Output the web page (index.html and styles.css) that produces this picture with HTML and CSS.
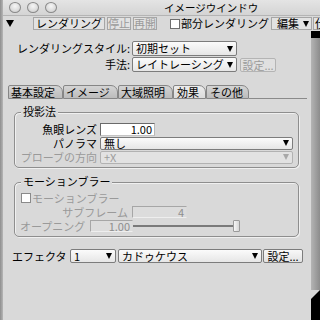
FILE: index.html
```html
<!DOCTYPE html>
<html lang="ja">
<head>
  <meta charset="UTF-8" />
  <title>イメージウインドウ</title>
  <link rel="stylesheet" href="styles.css">
</head>
<body>
  <div class="screen">
    <div class="edge"></div>
    <div class="win">
      <div class="titlebar">
        <span class="light"></span><span class="light"></span><span class="light"></span>
        <span class="title">イメージウインドウ</span>
      </div>

      <div class="toolbar">
        <span class="tri"></span>
        <span class="tbtn w-render">レンダリング</span>
        <span class="tbtn off w-small">停止</span>
        <span class="tbtn off w-small">再開</span>
        <span class="check"></span>
        <span class="check-text">部分レンダリング</span>
        <span class="tbtn w-edit">編集<span class="arrow"></span></span>
        <span class="tbtn w-more">仕様</span>
      </div>

      <div class="mid">
        <div class="body">
          <div class="frow">
            <span class="flabel">レンダリングスタイル:</span>
            <span class="sel w-style"><span class="txt">初期セット</span><span class="arrow"></span></span>
          </div>
          <div class="frow">
            <span class="flabel">手法:</span>
            <span class="sel w-style"><span class="txt">レイトレーシング</span><span class="arrow"></span></span>
            <span class="btn off w-set">設定...</span>
          </div>

          <div class="tabs">
            <span class="tab w-t1">基本設定</span>
            <span class="tab w-t1">イメージ</span>
            <span class="tab w-t1">大域照明</span>
            <span class="tab on w-t4">効果</span>
            <span class="tab w-t5">その他</span>
            <span class="tab-fill"></span>
          </div>

          <div class="group g-first">
            <div class="gtitle">投影法</div>
            <div class="grows">
              <div class="grow">
                <span class="glabel">魚眼レンズ</span>
                <span class="field w-fish">1.00</span>
              </div>
              <div class="grow">
                <span class="glabel">パノラマ</span>
                <span class="sel w-wide"><span class="txt">無し</span><span class="arrow"></span></span>
              </div>
              <div class="grow">
                <span class="glabel off-text">プローブの方向</span>
                <span class="sel dis w-wide"><span class="txt">+X</span><span class="arrow"></span></span>
              </div>
            </div>
          </div>

          <div class="group g-second">
            <div class="gtitle">モーションブラー</div>
            <div class="grows">
              <div class="grow pad-check">
                <span class="check"></span>
                <span class="off-text">モーションブラー</span>
              </div>
              <div class="grow">
                <span class="glabel sub off-text">サブフレーム</span>
                <span class="field dis w-sub">4</span>
              </div>
              <div class="grow">
                <span class="open-label off-text">オープニング</span>
                <span class="field dis w-open">1.00</span>
                <span class="track"></span>
                <span class="thumb"></span>
              </div>
            </div>
          </div>

          <div class="brow">
            <span class="blabel">エフェクタ</span>
            <span class="sel w-num"><span class="txt">1</span><span class="arrow"></span></span>
            <span class="sel w-eff"><span class="txt">カドゥケウス</span><span class="arrow"></span></span>
            <span class="btn w-bset">設定...</span>
          </div>
        </div>

        <div class="desk">
          <div class="desk-top"></div>
          <div class="desk-mid"></div>
          <div class="desk-bot"></div>
        </div>
      </div>
    </div>
  </div>
</body>
</html>
```

FILE: styles.css
```css
* {
  box-sizing: border-box;
}
body {
  margin: 0;
  font-family: "Noto Sans CJK JP", "Liberation Sans", sans-serif;
  font-size: 11px;
  color: #000;
}
.screen {
  display: flex;
  width: 320px;
  height: 320px;
  overflow: hidden;
  background: #d9d9d9;
}
.edge {
  width: 3px;
  background: linear-gradient(to right, #8e8e8e, #b6b6b6);
}
.win {
  width: 317px;
  display: flex;
  flex-direction: column;
}

/* title bar */
.titlebar {
  height: 16px;
  display: flex;
  align-items: center;
  padding-left: 6px;
  background: linear-gradient(#e4e4e4, #d4d4d4);
  border-bottom: 1px solid #b4b4b4;
}
.light {
  width: 12px;
  height: 11px;
  margin-right: 6px;
  border-radius: 50%;
  border: 1px solid #8a8a8a;
  background: radial-gradient(circle at 50% 35%, #f6f6f6, #cacaca);
}
.title {
  margin-left: 101px;
  font-size: 10.5px;
  line-height: 14px;
}

/* toolbar */
.toolbar {
  height: 15px;
  display: flex;
  align-items: center;
  padding-left: 3px;
  overflow: hidden;
  white-space: nowrap;
}
.tri {
  width: 0;
  height: 0;
  border-left: 4px solid transparent;
  border-right: 4px solid transparent;
  border-top: 7px solid #000;
  margin-right: 19px;
}
.tbtn {
  height: 13px;
  line-height: 11px;
  border: 1px solid #a6a6a6;
  background: #e2e2e2;
  text-align: center;
  flex-shrink: 0;
}
.tbtn + .tbtn {
  margin-left: 2px;
}
.w-render { width: 72px; }
.w-small { width: 24px; }
.w-edit {
  width: 41px;
  display: flex;
  align-items: center;
  padding-left: 5px;
  gap: 4px;
}
.w-more {
  width: 30px;
  margin-left: 1px !important;
  text-align: left;
  padding-left: 1px;
}
.off {
  color: #9a9a9a;
}
.check {
  width: 10px;
  height: 10px;
  border: 1px solid #6e6e6e;
  background: #fff;
  flex-shrink: 0;
}
.toolbar .check {
  margin-left: 13px;
}
.check-text {
  margin-left: 1px;
  margin-right: 2px;
  line-height: 13px;
}
.arrow {
  width: 0;
  height: 0;
  border-left: 3.5px solid transparent;
  border-right: 3.5px solid transparent;
  border-top: 6px solid #000;
  flex-shrink: 0;
}

/* body */
.mid {
  flex: 1;
  display: flex;
}
.body {
  width: 308px;
  padding-top: 10px;
}
.frow {
  display: flex;
  align-items: center;
  height: 15px;
}
.frow + .frow {
  margin-top: 1px;
}
.flabel {
  width: 127px;
  margin-right: 2px;
  text-align: right;
  line-height: 15px;
}
.sel {
  height: 15px;
  display: flex;
  align-items: center;
  padding: 0 3px;
  border: 1px solid #7c7c7c;
  border-radius: 2px;
  background: linear-gradient(#fbfbfb, #e6e6e6);
  line-height: 13px;
}
.sel .txt {
  flex: 1;
  white-space: nowrap;
}
.sel.dis {
  color: #9c9c9c;
  border-color: #b2b2b2;
  background: #e2e2e2;
}
.sel.dis .arrow {
  border-top-color: #a8a8a8;
}
.w-style { width: 105px; }
.btn {
  height: 14px;
  line-height: 12px;
  border: 1px solid #7c7c7c;
  border-radius: 2px;
  background: linear-gradient(#f8f8f8, #e2e2e2);
  text-align: center;
}
.btn.off {
  border-color: #b4b4b4;
  background: #e0e0e0;
}
.w-set {
  width: 36px;
  margin-left: 3px;
}

/* tabs */
.tabs {
  display: flex;
  height: 14px;
  margin: 13px 0 0 5px;
}
.tab {
  height: 14px;
  padding-left: 2px;
  line-height: 12px;
  border: 1px solid #868686;
  border-radius: 2px 7px 0 0;
  background: linear-gradient(#d4d4d4, #bcbcbc);
}
.tab.on {
  background: linear-gradient(#ececec, #dcdcdc);
}
.w-t1 { width: 55px; }
.w-t4 { width: 33px; padding-left: 3px; }
.w-t5 { width: 43px; padding-left: 3px; }
.tab-fill {
  width: 58px;
  border-bottom: 1px solid #8a8a8a;
}

/* group boxes */
.group {
  width: 285px;
  margin-left: 11px;
  border: 1px solid #8e8e8e;
  border-radius: 5px;
  box-shadow: inset 1px 1px 0 #f0f0f0, 1px 1px 0 #f0f0f0;
}
.g-first {
  margin-top: 13px;
}
.g-second {
  margin-top: 14px;
}
.gtitle {
  width: fit-content;
  height: 13px;
  margin: -8px 0 0 6px;
  padding: 0 2px;
  line-height: 13px;
  background: #d9d9d9;
}
.grows {
  padding: 4px 0 3px;
}
.g-second .grows {
  padding-top: 3px;
}
.grow {
  display: flex;
  align-items: center;
  height: 14px;
  line-height: 13px;
}
.glabel {
  width: 82px;
  margin-right: 3px;
  text-align: right;
  white-space: nowrap;
}
.glabel.sub {
  width: 113px;
  margin-right: 4px;
}
.off-text {
  color: #9a9a9a;
}
.field {
  height: 13px;
  padding-right: 2px;
  line-height: 11px;
  text-align: right;
  border: 1px solid #6a6a6a;
  border-right-color: #b8b8b8;
  border-bottom-color: #c4c4c4;
  background: #fff;
}
.field.dis {
  height: 12px;
  line-height: 10px;
  color: #8e8e8e;
  border-color: #a6a6a6 #dadada #eeeeee #a6a6a6;
  background: #dcdcdc;
}
.w-fish { width: 55px; }
.w-wide { width: 193px; height: 13px; }
.pad-check {
  padding-left: 6px;
}
.pad-check .check {
  margin-right: 1px;
  border-color: #8a8a8a;
}
.w-sub { width: 55px; }
.open-label {
  width: 75px;
  padding-left: 5px;
  white-space: nowrap;
}
.w-open { width: 43px; }
.track {
  width: 100px;
  height: 2px;
  background: #7a7a7a;
}
.thumb {
  width: 7px;
  height: 12px;
  border: 1px solid #9a9a9a;
  border-radius: 1px;
  background: linear-gradient(to right, #f6f6f6, #d6d6d6);
}

/* effector row */
.brow {
  display: flex;
  align-items: center;
  height: 14px;
  margin-top: 12px;
}
.blabel {
  width: 67px;
  padding-left: 9px;
  line-height: 14px;
}
.w-num { width: 46px; height: 14px; }
.w-eff { width: 144px; height: 14px; margin-left: 2px; }
.w-bset {
  width: 40px;
  margin-left: 1px;
}

/* desktop strip on the right */
.desk {
  width: 9px;
  display: flex;
  flex-direction: column;
}
.desk-top {
  height: 7px;
  background: #000;
}
.desk-mid {
  flex: 1;
  background: linear-gradient(to right, #b4b4b4, #8c8c8c);
}
.desk-bot {
  height: 30px;
  background: #000;
  clip-path: polygon(0 9px, 100% 0, 100% 100%, 0 100%);
}
```
